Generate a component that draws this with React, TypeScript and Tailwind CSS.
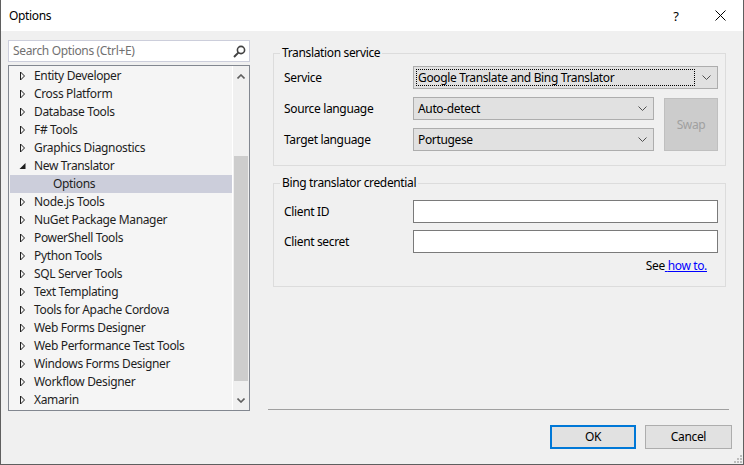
import React from "react";

const items: { label: string; kind: "closed" | "open" | "child" }[] = [
  { label: "Entity Developer", kind: "closed" },
  { label: "Cross Platform", kind: "closed" },
  { label: "Database Tools", kind: "closed" },
  { label: "F# Tools", kind: "closed" },
  { label: "Graphics Diagnostics", kind: "closed" },
  { label: "New Translator", kind: "open" },
  { label: "Options", kind: "child" },
  { label: "Node.js Tools", kind: "closed" },
  { label: "NuGet Package Manager", kind: "closed" },
  { label: "PowerShell Tools", kind: "closed" },
  { label: "Python Tools", kind: "closed" },
  { label: "SQL Server Tools", kind: "closed" },
  { label: "Text Templating", kind: "closed" },
  { label: "Tools for Apache Cordova", kind: "closed" },
  { label: "Web Forms Designer", kind: "closed" },
  { label: "Web Performance Test Tools", kind: "closed" },
  { label: "Windows Forms Designer", kind: "closed" },
  { label: "Workflow Designer", kind: "closed" },
  { label: "Xamarin", kind: "closed" },
];

function Chevron({ up }: { up?: boolean }) {
  return (
    <svg width="8" height="5" viewBox="0 0 8 5">
      <path
        d={up ? "M0.5 4.5 L4 1 L7.5 4.5" : "M0.5 0.5 L4 4 L7.5 0.5"}
        fill="none"
        stroke="#606060"
        strokeWidth="1.6"
      />
    </svg>
  );
}

function ComboArrow() {
  return (
    <svg width="9" height="5" viewBox="0 0 9 5">
      <path d="M0.5 0.5 L4.5 4.5 L8.5 0.5" fill="none" stroke="#505050" strokeWidth="1" />
    </svg>
  );
}

function Combo({ value, focused }: { value: string; focused?: boolean }) {
  return (
    <div className="flex h-[23px] flex-1 items-center border border-[#adadad] bg-[#e1e1e1] pl-[2px] pr-[6px]">
      <div
        className={
          focused
            ? "flex h-[17px] flex-1 items-center border border-dotted border-black pl-[1px]"
            : "flex h-[17px] flex-1 items-center pl-[2px]"
        }
      >
        {value}
      </div>
      <div className="ml-[7px] flex items-center">
        <ComboArrow />
      </div>
    </div>
  );
}

export default function App() {
  return (
    <div className="relative flex h-[465px] w-[744px] flex-col border-x border-b border-[#5f5f5f] bg-[#f0f0f0] font-['Noto_Sans'] text-[12px] leading-[16px] tracking-[-0.35px] text-black">
      {/* title bar */}
      <div className="flex h-[31px] items-center bg-white pl-[8px]">
        <span className="flex-1">Options</span>
        <div className="flex h-full w-[44px] items-center justify-center pl-[2px] text-[13px]">?</div>
        <div className="flex h-full w-[46px] items-center justify-center">
          <svg width="11" height="11" viewBox="0 0 11 11">
            <path d="M0.5 0.5 L10.5 10.5 M10.5 0.5 L0.5 10.5" stroke="#000" strokeWidth="1" />
          </svg>
        </div>
      </div>

      <div className="flex h-[380px]">
        {/* left column */}
        <div className="ml-[7px] flex w-[242px] flex-col pt-[9px]">
          <div className="flex h-[22px] items-center border border-[#cccedb] bg-white pl-[4px] pr-[3px]">
            <span className="flex-1 text-[#717171]">Search Options (Ctrl+E)</span>
            <svg width="13" height="13" viewBox="0 0 13 13">
              <circle cx="8" cy="5" r="3.6" fill="none" stroke="#424242" strokeWidth="1.6" />
              <path d="M5.6 7.4 L1 12" stroke="#424242" strokeWidth="2" />
            </svg>
          </div>
          <div className="mt-[3px] flex h-[346px] border border-[#828790] bg-[#f5f5f5]">
            <div className="flex-1 pl-[1px] pt-[1px]">
              {items.map((it) => (
                <div
                  key={it.label}
                  className={
                    it.kind === "child"
                      ? "flex h-[18px] items-center bg-[#cccedb] pl-[43px] text-[#1e1e1e]"
                      : "flex h-[18px] items-center text-[#1e1e1e]"
                  }
                >
                  {it.kind !== "child" && (
                    <div className="flex w-[24px] items-center pl-[9px]">
                      {it.kind === "closed" ? (
                        <svg width="7" height="10" viewBox="0 0 7 10">
                          <path d="M1.5 1 L5.5 5 L1.5 9 Z" fill="none" stroke="#1e1e1e" strokeWidth="1" />
                        </svg>
                      ) : (
                        <svg width="7" height="10" viewBox="0 0 7 10">
                          <path d="M6.5 2 L6.5 8 L0.5 8 Z" fill="#1e1e1e" />
                        </svg>
                      )}
                    </div>
                  )}
                  <span className="whitespace-nowrap">{it.label}</span>
                </div>
              ))}
            </div>
            {/* scrollbar */}
            <div className="flex w-[17px] flex-col border-l border-white bg-[#f0f0f0]">
              <div className="flex h-[18px] items-center justify-center pt-[2px]">
                <Chevron up />
              </div>
              <div className="flex-1 px-[1px] pt-[72px]">
                <div className="h-[225px] bg-[#cdcdcd]" />
              </div>
              <div className="flex h-[18px] items-center justify-center pb-[2px]">
                <Chevron />
              </div>
            </div>
          </div>
        </div>

        {/* right column */}
        <div className="ml-[18px] flex w-[461px] flex-col pt-[14px]">
          <fieldset className="ml-[5px] mr-[3px] border border-[#dcdcdc]">
            <legend className="ml-[6px] px-[2px] leading-[16px]">Translation service</legend>
            <div className="pb-[14px] pl-[10px] pr-[7px] pt-[5px]">
              <div className="flex h-[23px] items-center">
                <span className="w-[129px]">Service</span>
                <Combo value="Google Translate and Bing Translator" focused />
              </div>
              <div className="mt-[8px] flex">
                <div className="flex w-[370px] flex-col">
                  <div className="flex h-[23px] items-center">
                    <span className="w-[129px]">Source language</span>
                    <Combo value="Auto-detect" />
                  </div>
                  <div className="mt-[8px] flex h-[23px] items-center">
                    <span className="w-[129px]">Target language</span>
                    <Combo value="Portugese" />
                  </div>
                </div>
                <div className="ml-[10px] mt-[1px] flex h-[53px] flex-1 items-center justify-center border border-[#bfbfbf] bg-[#cccccc] text-[#a0a0a0]">
                  Swap
                </div>
              </div>
            </div>
          </fieldset>

          <fieldset className="ml-[5px] mr-[3px] mt-[9px] border border-[#dcdcdc]">
            <legend className="ml-[6px] px-[2px] leading-[16px]">Bing translator credential</legend>
            <div className="pb-[12px] pl-[10px] pr-[7px] pt-[9px]">
              <div className="flex h-[23px] items-center">
                <span className="w-[129px]">Client ID</span>
                <div className="h-[23px] flex-1 border border-[#7a7a7a] bg-white" />
              </div>
              <div className="mt-[7px] flex h-[23px] items-center">
                <span className="w-[129px]">Client secret</span>
                <div className="h-[23px] flex-1 border border-[#7a7a7a] bg-white" />
              </div>
              <div className="mt-[5px] pr-[11px] text-right leading-[16px]">
                See
                <a href="#" className="text-[#0000ff] underline">
                  {" "}how to.
                </a>
              </div>
            </div>
          </fieldset>

          <div className="flex-1" />
          <div className="mb-[1px] h-px bg-[#a0a0a0]" />
        </div>
      </div>

      {/* buttons */}
      <div className="flex flex-1 justify-end gap-[9px] pr-[11px] pt-[14px]">
        <button className="h-[24px] w-[86px] border-2 border-[#0078d7] bg-[#e1e1e1]">OK</button>
        <button className="h-[24px] w-[87px] border border-[#adadad] bg-[#e1e1e1]">Cancel</button>
      </div>

      <svg className="absolute bottom-[1px] right-[1px]" width="10" height="10" viewBox="0 0 10 10">
        <rect x="8" y="2" width="2" height="2" fill="#bdbdbd" />
        <rect x="5" y="5" width="2" height="2" fill="#bdbdbd" />
        <rect x="8" y="5" width="2" height="2" fill="#bdbdbd" />
        <rect x="2" y="8" width="2" height="2" fill="#bdbdbd" />
        <rect x="5" y="8" width="2" height="2" fill="#bdbdbd" />
        <rect x="8" y="8" width="2" height="2" fill="#bdbdbd" />
      </svg>
    </div>
  );
}
